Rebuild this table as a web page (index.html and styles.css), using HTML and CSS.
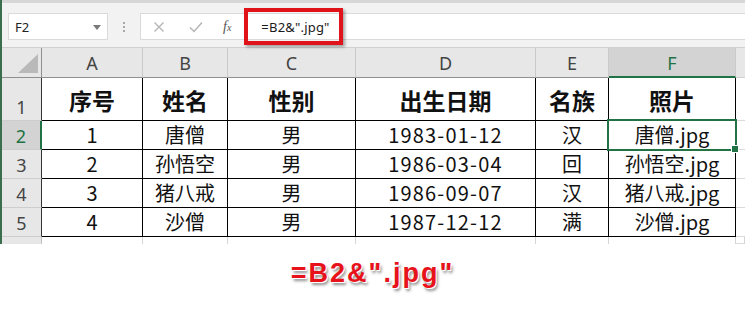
FILE: index.html
```html
<!DOCTYPE html>
<html lang="zh-CN">
<head>
<meta charset="utf-8">
<link rel="stylesheet" href="styles.css">
</head>
<body>
<div class="app">
  <div class="topband"></div>
  <div class="fbar">
    <div class="namebox">
      <span class="nb-text">F2</span>
      <svg class="caret" width="8" height="5" viewBox="0 0 8 5"><path d="M0 0H8L4 5Z" fill="#7a7a7a"/></svg>
    </div>
    <div class="grip"><i></i><i></i><i></i></div>
    <div class="finput">
      <svg class="ico" width="12" height="12" viewBox="0 0 12 12"><path d="M1.5 1.5L10.5 10.5M10.5 1.5L1.5 10.5" stroke="#b5b5b5" stroke-width="1.4" fill="none"/></svg>
      <svg class="ico ico-ok" width="14" height="12" viewBox="0 0 14 12"><path d="M1 6.5L5 10.5L13 1.5" stroke="#b5b5b5" stroke-width="1.5" fill="none"/></svg>
      <span class="fx">f<span class="fx-x">x</span></span>
      <span class="ftext">=B2&amp;".jpg"</span>
      <div class="hl"></div>
    </div>
  </div>
  <div class="sheet">
    <div class="ch corner"><svg width="20" height="19" viewBox="0 0 20 19"><path d="M0 19H20V0Z" fill="#b9b9b9"/></svg></div>
    <div class="ch">A</div><div class="ch">B</div><div class="ch">C</div><div class="ch">D</div><div class="ch">E</div><div class="ch ch-sel">F</div><div class="ch ch-rest"></div>

    <div class="rh">1</div>
    <div class="c hd">序号</div><div class="c hd">姓名</div><div class="c hd">性别</div><div class="c hd">出生日期</div><div class="c hd">名族</div><div class="c hd">照片</div><div class="c rest"></div>

    <div class="rh rh-sel">2</div>
    <div class="c">1</div><div class="c">唐僧</div><div class="c">男</div><div class="c date">1983-01-12</div><div class="c">汉</div><div class="c sel">唐僧.jpg</div><div class="c rest"></div>

    <div class="rh">3</div>
    <div class="c">2</div><div class="c">孙悟空</div><div class="c">男</div><div class="c date">1986-03-04</div><div class="c">回</div><div class="c">孙悟空.jpg</div><div class="c rest"></div>

    <div class="rh">4</div>
    <div class="c">3</div><div class="c">猪八戒</div><div class="c">男</div><div class="c date">1986-09-07</div><div class="c">汉</div><div class="c">猪八戒.jpg</div><div class="c rest"></div>

    <div class="rh">5</div>
    <div class="c">4</div><div class="c">沙僧</div><div class="c">男</div><div class="c date">1987-12-12</div><div class="c">满</div><div class="c">沙僧.jpg</div><div class="c rest"></div>

    <div class="rh rh-last">6</div>
    <div class="e"></div><div class="e"></div><div class="e"></div><div class="e"></div><div class="e"></div><div class="e"></div><div class="e rest"></div>
  </div>
</div>
<div class="caption">=B2&amp;".jpg"</div>
</body>
</html>
```

FILE: styles.css
```css
* { box-sizing: border-box; }
html, body { margin: 0; padding: 0; background: #fff; }
body { width: 745px; height: 317px; overflow: hidden; font-family: "Noto Sans", "Noto Sans CJK SC", sans-serif; }

.app { border-left: 2px solid #3b6e4f; }

.topband { height: 3px; background: #d7d7d7; }

.fbar {
  height: 45px;
  background: #f2f2f2;
  border-bottom: 1px solid #d0d0d0;
  display: flex;
  align-items: flex-start;
  padding-top: 10px;
  padding-left: 6px;
}

.namebox {
  width: 100px;
  height: 27px;
  background: #fff;
  border: 1px solid #dadada;
  display: flex;
  align-items: center;
  justify-content: space-between;
  padding: 0 6px 0 6px;
  font-size: 13px;
  color: #222;
}
.caret { margin-top: 1px; }

.grip {
  width: 32px;
  height: 27px;
  display: flex;
  flex-direction: column;
  align-items: center;
  justify-content: center;
  gap: 2px;
}
.grip i { display: block; width: 2px; height: 2px; background: #a8a8a8; }

.finput {
  position: relative;
  flex: 1;
  height: 27px;
  background: #fff;
  border: 1px solid #dadada;
  border-right: none;
  display: flex;
  align-items: center;
  padding-left: 12px;
}
.ico { flex: none; }
.ico-ok { margin-left: 24px; }
.fx {
  margin-left: 20px;
  font-family: "Liberation Serif", serif;
  font-style: italic;
  font-size: 14px;
  color: #555;
}
.fx-x { font-size: 10px; }
.ftext {
  margin-left: 30px;
  font-size: 13px;
  color: #1a1a1a;
  letter-spacing: 0.2px;
}
.hl {
  position: absolute;
  left: 103px;
  top: -6px;
  width: 99px;
  height: 37px;
  border: 4px solid #e0131b;
  box-shadow: 2px 2px 3px rgba(0,0,0,0.35);
}

.sheet {
  display: grid;
  grid-template-columns: 40px 101px 85px 128px 180px 73px 127px 1fr;
  grid-template-rows: 30px 43px 29px 29px 29px 29px 7px;
  overflow: hidden;
}

.ch {
  background: #e7e7e7;
  border-right: 1px solid #c9c9c9;
  border-bottom: 1px solid #8f8f8f;
  display: flex;
  align-items: center;
  justify-content: center;
  font-size: 18px;
  color: #444;
  font-family: "Noto Sans", sans-serif;
  padding-top: 1px;
}
.corner { align-items: flex-end; justify-content: flex-end; padding: 0 3px 4px 0; border-right-color: #8f8f8f; }
.ch-sel { background: #d3d3d3; color: #217346; border-bottom: 2px solid #217346; }
.ch-rest { border-right: none; border-bottom-color: #d0d0d0; }

.rh {
  background: #e7e7e7;
  border-right: 1px solid #333;
  border-bottom: 1px solid #cdcdcd;
  display: flex;
  align-items: flex-end;
  justify-content: center;
  font-size: 18px;
  color: #444;
  padding-bottom: 1px;
  line-height: 24px;
}
.rh-sel { background: #d3d3d3; color: #217346; border-right: 2px solid #217346; }
.rh-last { border-right-color: #c0c0c0; border-bottom: none; align-items: flex-start; padding-top: 2px; overflow: hidden; }

.c {
  border-right: 1px solid #000;
  border-bottom: 1px solid #000;
  display: flex;
  align-items: flex-end;
  justify-content: center;
  font-family: "Noto Sans CJK SC", sans-serif;
  font-size: 20px;
  color: #111;
  line-height: 26px;
  padding-bottom: 1px;
  white-space: nowrap;
}
.date { letter-spacing: 1.2px; }
.hd { font-size: 23px; font-weight: 700; line-height: 32px; padding-bottom: 4px; }
.rest { border-right: none; border-bottom: 1px solid #dadada; }

.sel { position: relative; }
.sel::after {
  content: "";
  position: absolute;
  left: -2px; top: -2px; right: -2px; bottom: -2px;
  border: 2px solid #217346;
}
.sel::before {
  content: "";
  position: absolute;
  right: -4px; bottom: -4px;
  width: 6px; height: 6px;
  background: #217346;
  border: 1px solid #fff;
  z-index: 1;
}

.e { border-right: 1px solid #d6d6d6; }

.caption {
  text-align: center;
  padding-top: 11px;
  font-family: "Liberation Sans", Arial, sans-serif;
  font-weight: 700;
  font-size: 27px;
  letter-spacing: 2px;
  color: #e8121a;
  text-shadow: 1px 1px 0 #fff, 2px 3px 3px rgba(0,0,0,0.45);
  line-height: 36px;
}
```
